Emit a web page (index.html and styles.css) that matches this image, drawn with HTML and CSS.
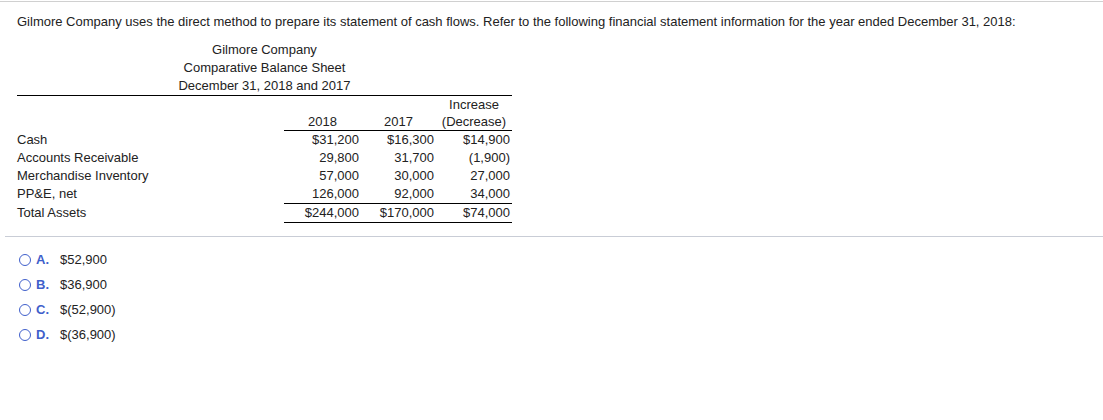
FILE: index.html
```html
<!DOCTYPE html>
<html>
<head>
<meta charset="utf-8">
<link rel="stylesheet" href="styles.css">
</head>
<body>
<div class="page">
  <p class="intro">Gilmore Company uses the direct method to prepare its statement of cash flows. Refer to the following financial statement information for the year ended December 31, 2018:</p>
  <div class="sheet">
    <div class="title">
      <div>Gilmore Company</div>
      <div>Comparative Balance Sheet</div>
      <div>December 31, 2018 and 2017</div>
    </div>
    <table class="bs">
      <colgroup>
        <col class="c-label"><col class="c-num"><col class="c-num2"><col class="c-num3">
      </colgroup>
      <tr class="h1"><td></td><td></td><td></td><th>Increase</th></tr>
      <tr class="h2"><td class="nb"></td><th>2018</th><th>2017</th><th>(Decrease)</th></tr>
      <tr><td class="lbl">Cash</td><td class="num">$31,200</td><td class="num">$16,300</td><td class="num">$14,900</td></tr>
      <tr><td class="lbl">Accounts Receivable</td><td class="num">29,800</td><td class="num">31,700</td><td class="num">(1,900)</td></tr>
      <tr><td class="lbl">Merchandise Inventory</td><td class="num">57,000</td><td class="num">30,000</td><td class="num">27,000</td></tr>
      <tr class="pre"><td class="lbl">PP&amp;E, net</td><td class="num">126,000</td><td class="num">92,000</td><td class="num">34,000</td></tr>
      <tr class="tot"><td class="lbl">Total Assets</td><td class="num">$244,000</td><td class="num">$170,000</td><td class="num">$74,000</td></tr>
    </table>
  </div>
  <hr class="sep">
  <ul class="opts">
    <li><span class="radio"></span><span class="key">A.</span><span class="val">$52,900</span></li>
    <li><span class="radio"></span><span class="key">B.</span><span class="val">$36,900</span></li>
    <li><span class="radio"></span><span class="key">C.</span><span class="val">$(52,900)</span></li>
    <li><span class="radio"></span><span class="key">D.</span><span class="val">$(36,900)</span></li>
  </ul>
</div>
</body>
</html>
```

FILE: styles.css
```css
html, body {
  margin: 0;
  padding: 0;
  background: #fff;
}
body {
  font-family: "Liberation Sans", Arial, sans-serif;
  font-size: 13px;
  color: #222;
}
.page {
  margin-top: 1px;
  border-top: 1px solid #d0d0d0;
}
.intro {
  margin: 0;
  padding: 11px 17px 0;
  line-height: 18px;
}
.sheet {
  width: 495px;
  margin-left: 17px;
  margin-top: 10px;
}
.title {
  text-align: center;
  line-height: 18px;
}
.bs {
  width: 495px;
  border-collapse: collapse;
  border-top: 1px solid #000;
  table-layout: fixed;
}
.c-label { width: 267px; }
.c-num { width: 77px; }
.c-num2 { width: 75px; }
.c-num3 { width: 76px; }
.bs td, .bs th {
  padding: 0;
  line-height: 18px;
  font-weight: normal;
  white-space: nowrap;
}
.bs th {
  text-align: center;
}
.h1 td, .h1 th {
  height: 17px;
  line-height: 17px;
}
.h2 th {
  height: 17px;
  line-height: 17px;
  border-bottom: 1px solid #000;
}
.num {
  text-align: right;
  padding-right: 2px !important;
}
.lbl {
  text-align: left;
}
.pre .num {
  border-bottom: 1px solid #000;
}
.tot td {
  height: 18px;
}
.tot .num {
  border-bottom: 1px solid #000;
}
.sep {
  margin: 13px 0 0 5px;
  border: 0;
  border-top: 1px solid #c9cdd6;
  height: 0;
}
.opts {
  list-style: none;
  margin: 10px 0 0;
  padding: 0 0 0 19px;
}
.opts li {
  display: flex;
  align-items: center;
  height: 25px;
}
.radio {
  width: 10px;
  height: 10px;
  border: 1.5px solid #3f5fcb;
  border-radius: 50%;
  flex: none;
}
.key {
  color: #3f5fcb;
  font-weight: bold;
  margin-left: 5px;
  width: 24px;
}
.val {
  color: #222;
}
```
